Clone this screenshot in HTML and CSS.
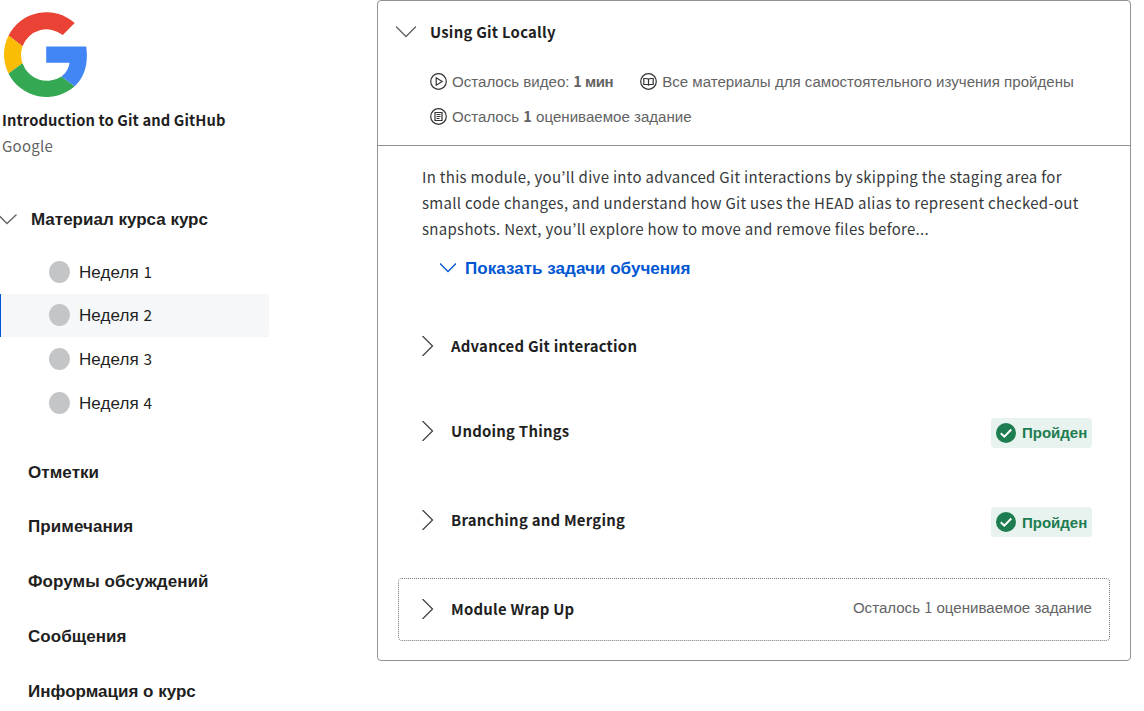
FILE: index.html
```html
<!DOCTYPE html>
<html lang="ru">
<head>
<meta charset="utf-8">
<title>Introduction to Git and GitHub</title>
<link rel="stylesheet" href="styles.css">
</head>
<body>
<div class="page">
  <aside class="sidebar">
    <svg class="logo" viewBox="0 0 83 85" width="83" height="85">
      <path fill="#ea4335" d="M4.500 23.500A42.500 42.500 0 0 1 70.700 11L58.800 23A25.800 25.800 0 0 0 18.500 34.200Z"/>
      <path fill="#fbbc05" d="M4.500 23.500L18.500 34.200A26 26 0 0 0 18.500 51.200L4.500 61.500A42.500 42.500 0 0 1 4.500 23.500Z"/>
      <path fill="#34a853" d="M4.500 61.500L18.500 51.200A26 26 0 0 0 57.500 64.500L70.700 74.300A42.500 42.500 0 0 1 4.500 61.500Z"/>
      <path fill="#4285f4" d="M42.200 34.500H82.200C84.500 51 81 65 70.700 74.300L57.500 64.500C62 61 64.500 57 65.500 50.800H42.200Z"/>
    </svg>
    <h1 class="course latin" lang="en">Introduction to Git and GitHub</h1>
    <p class="partner latin" lang="en">Google</p>
    <div class="material">
      <svg class="chevron" viewBox="0 0 17 11" width="17" height="11"><path d="M-2 0.5L7 9.5L16.500 0.5"/></svg>
      <h2 class="material-title">Материал курса курс</h2>
    </div>
    <ul class="weeks">
      <li class="week"><i class="dot"></i><span class="week-name">Неделя <b class="digit">1</b></span></li>
      <li class="week current"><i class="dot"></i><span class="week-name">Неделя <b class="digit">2</b></span></li>
      <li class="week"><i class="dot"></i><span class="week-name">Неделя <b class="digit">3</b></span></li>
      <li class="week"><i class="dot"></i><span class="week-name">Неделя <b class="digit">4</b></span></li>
    </ul>
    <nav class="links">
      <a class="link">Отметки</a>
      <a class="link">Примечания</a>
      <a class="link">Форумы обсуждений</a>
      <a class="link">Сообщения</a>
      <a class="link">Информация о курс</a>
    </nav>
  </aside>
  <main class="module">
    <header class="head">
      <div class="head-title">
        <svg class="chevron" viewBox="0 0 20 12" width="20" height="12"><path d="M0 0.500L10 10.500L20 0.500"/></svg>
        <h2 class="title latin" lang="en">Using Git Locally</h2>
      </div>
      <div class="meta">
        <div class="meta-item">
          <svg class="icon" viewBox="0 0 17 17" width="17" height="17"><circle cx="8.500" cy="8.500" r="7.800"/><path d="M6.200 4.800V12.200L12.200 8.500Z"/></svg>
          <span>Осталось видео: <b class="minutes"><span class="num">1</span> мин</b></span>
        </div>
        <div class="meta-item">
          <svg class="icon" viewBox="0 0 17 17" width="17" height="17"><circle cx="8.500" cy="8.500" r="7.800"/><path d="M8.500 6C7.500 5.300 6 5.500 3.800 5.500V11.500H7.500L8.500 12L9.500 11.500H13.200V5.500C11 5.500 9.500 5.300 8.500 6V12"/></svg>
          <span>Все материалы для самостоятельного изучения пройдены</span>
        </div>
      </div>
      <div class="meta">
        <div class="meta-item">
          <svg class="icon" viewBox="0 0 17 17" width="17" height="17"><circle cx="8.500" cy="8.500" r="7.800"/><path d="M5 4.500H12V12.500H5ZM6.500 6.500H10.500M6.500 8.500H10.500M6.500 10.500H9.500"/></svg>
          <span>Осталось <b class="num">1</b> оцениваемое задание</span>
        </div>
      </div>
    </header>
    <section class="content">
      <p class="description latin" lang="en">In this module, you’ll dive into advanced Git interactions by skipping the staging area for<br>small code changes, and understand how Git uses the HEAD alias to represent checked-out<br>snapshots. Next, you’ll explore how to move and remove files before...</p>
      <a class="objectives">
        <svg class="chevron blue" viewBox="0 0 16 10" width="16" height="10"><path d="M0 0.500L8 8.500L16 0.500"/></svg>
        <span class="objectives-label">Показать задачи обучения</span>
      </a>
      <div class="lesson first">
        <svg class="chevron dark" viewBox="0 0 12 20" width="12" height="20"><path d="M0.500 0L10.500 10L0.500 20"/></svg>
        <h3 class="lesson-title latin" lang="en">Advanced Git interaction</h3>
      </div>
      <div class="lesson second">
        <svg class="chevron dark" viewBox="0 0 12 20" width="12" height="20"><path d="M0.500 0L10.500 10L0.500 20"/></svg>
        <h3 class="lesson-title latin" lang="en">Undoing Things</h3>
        <span class="badge"><svg viewBox="0 0 20 20" width="20" height="20"><circle class="disc" cx="10" cy="10" r="10"/><path class="tick" d="M4.800 10.300L8.300 13.700L15.300 6.500"/></svg><span class="badge-label">Пройден</span></span>
      </div>
      <div class="lesson third">
        <svg class="chevron dark" viewBox="0 0 12 20" width="12" height="20"><path d="M0.500 0L10.500 10L0.500 20"/></svg>
        <h3 class="lesson-title latin" lang="en">Branching and Merging</h3>
        <span class="badge"><svg viewBox="0 0 20 20" width="20" height="20"><circle class="disc" cx="10" cy="10" r="10"/><path class="tick" d="M4.800 10.300L8.300 13.700L15.300 6.500"/></svg><span class="badge-label">Пройден</span></span>
      </div>
      <div class="lesson wrap">
        <svg class="chevron dark" viewBox="0 0 12 20" width="12" height="20"><path d="M0.500 0L10.500 10L0.500 20"/></svg>
        <h3 class="lesson-title latin" lang="en">Module Wrap Up</h3>
        <span class="remaining">Осталось <span class="num">1</span> оцениваемое задание</span>
      </div>
    </section>
  </main>
</div>
</body>
</html>
```
FILE: styles.css
```css
* { box-sizing: border-box; }
body { margin: 0; background: #fff; color: #1f1f1f; font: 16px/26px "Liberation Sans", Arial, sans-serif; }
h1, h2, h3, p, ul { margin: 0; padding: 0; font-size: inherit; }
svg { display: block; flex: none; overflow: hidden; }
.latin, .digit, .num { font-family: "Noto Sans CJK KR", sans-serif; }
.digit { font-weight: 400; font-size: 15.4px; line-height: 1; }
.num { font-size: 14.5px; line-height: 1; }
.page { display: flex; gap: 108px; height: 711px; overflow: hidden; white-space: nowrap; }

.sidebar { width: 269px; flex: none; padding-top: 12px; }
.logo { margin-left: 4px; }
.course { margin: 10px 0 0 2px; font-size: 14.7px; font-weight: 700; letter-spacing: 0.13px; }
.partner { margin-left: 2px; font-size: 15px; letter-spacing: 0.25px; color: #636363; }
.material { display: flex; align-items: center; gap: 14px; height: 44px; margin-top: 38px; }
.material-title { padding-top: 2px; font-size: 17px; }
.chevron { fill: none; stroke: #636363; stroke-width: 1.3; }
.chevron.dark { stroke: #444; }
.chevron.blue { stroke: #0056d2; }
.weeks { margin-top: 9px; list-style: none; }
.week { display: flex; align-items: center; gap: 9px; height: 44px; padding-left: 49px; font-size: 17px; letter-spacing: 0.07px; }
.week-name { padding-top: 2px; }
.week.current { height: 43px; background: #f5f7f8; box-shadow: inset 1px 0 #0056d2; border-radius: 0 4px 4px 0; }
.current .week-name { padding-top: 1px; }
.current .dot { margin-top: -1px; }
.dot { width: 21px; height: 22px; border-radius: 50%; background: #c4c5c7; }
.links { display: flex; flex-direction: column; margin: 20.7px 0 0 28px; }
.link { height: 54.75px; line-height: 54.75px; font-size: 17px; font-weight: 700; letter-spacing: 0.07px; }
.link:last-child { letter-spacing: 0; }

.module { width: 754px; height: 661px; flex: none; border: 1px solid #8f9194; border-radius: 4px; }
.head { height: 145px; padding: 18px 0 0 18px; border-bottom: 1px solid #8f9194; color: #636363; font-size: 15.08px; }
.head-title { display: flex; align-items: center; gap: 14px; height: 26px; margin-bottom: 19px; }
.title { color: #1f1f1f; font-size: 14.9px; letter-spacing: 0.24px; }
.meta { display: flex; gap: 27px; height: 35px; padding-left: 34px; }
.meta-item { display: flex; align-items: center; gap: 5px; }
.minutes { margin-left: -0.6px; letter-spacing: -0.45px; }
.icon { fill: none; stroke: #333; stroke-width: 1.2; }
.content { padding: 18px 20px 0; }
.description { margin-left: 24px; color: #373a3c; font-size: 15px; letter-spacing: 0.3px; }
.objectives { display: flex; align-items: center; gap: 9px; height: 26px; margin: 13px 0 0 42px; color: #0056d2; font-size: 17px; font-weight: 700; }
.objectives-label { padding-top: 2px; letter-spacing: 0.04px; }
.lesson { display: flex; align-items: center; height: 63px; padding: 0 18px 0 23px; border: 1px solid transparent; }
.lesson-title { margin-left: 17px; font-size: 14.9px; letter-spacing: 0.24px; }
.first { margin-top: 33px; }
.second { margin-top: 22px; }
.third { margin-top: 26px; }
.wrap { margin-top: 27px; padding-bottom: 2px; border: 1px dotted #777; border-radius: 4px; }
.badge { display: flex; align-items: center; gap: 6px; width: 101px; height: 30px; margin: 4px -1px 0 auto; padding-left: 5px; border-radius: 4px; background: #e8f2ee; color: #1d7c50; font-size: 15px; font-weight: 700; }
.third .badge-label { padding-top: 2px; }
.disc { fill: #1d7c50; }
.tick { fill: none; stroke: #fff; stroke-width: 2; }
.remaining { margin: -1px -1px 0 auto; color: #636363; font-size: 15.08px; }
```
